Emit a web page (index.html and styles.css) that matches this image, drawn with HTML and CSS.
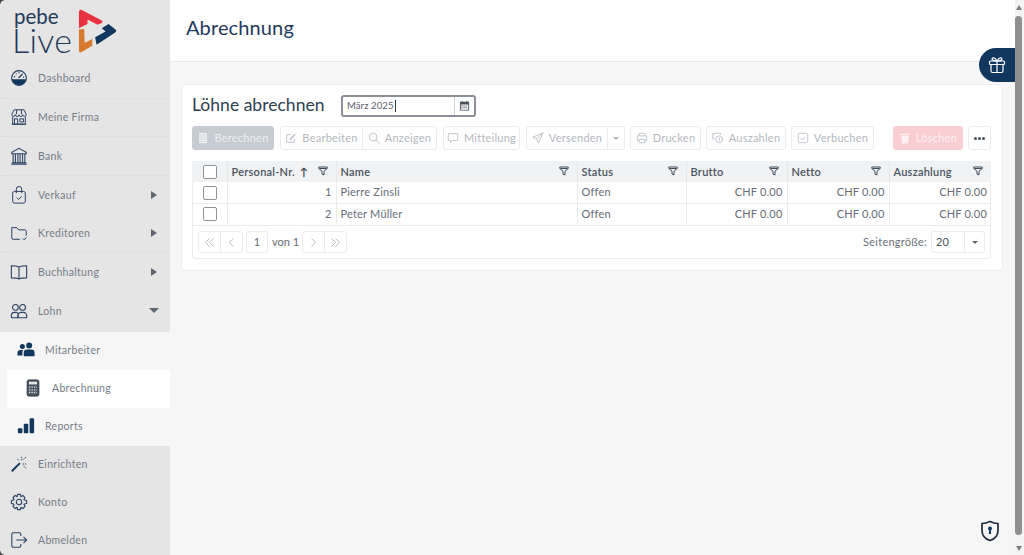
FILE: index.html
```html
<!DOCTYPE html>
<html lang="de">
<head>
<meta charset="utf-8">
<title>Abrechnung</title>
<link rel="stylesheet" href="styles.css">
</head>
<body>
<div class="app">
  <span class="corner tl"></span>
  <span class="corner bl"></span>
  <aside class="sidebar">
    <div class="logo">
      <div class="logo-text"><span class="pebe">pebe</span><span class="live">Live</span></div>
      <svg class="logo-mark" width="40" height="45" viewBox="0 0 42 46">
        <path fill="#e8323f" d="M1 1.500 L3 0 L25 11.500 Q26.500 13 25 14 L20.500 16 L10 10.500 L10 15 L1 19.500 Z"/>
        <path fill="#d87a2e" d="M1 21 L6.500 20.500 L7 35 L15 31 L15 38 L3 45 Q1 45 1 43 Z"/>
        <path fill="#12375e" d="M32 15 L40 21.500 Q40.500 23 39 24 L19.500 37 L18 29 L29 23 L25 19.500 Z"/>
      </svg>
    </div>
    <nav class="nav">
      <a class="item sep">
        <svg class="ico" viewBox="0 0 20 20"><circle cx="10" cy="10" r="8.200" fill="none" stroke="#1f3a5c" stroke-width="1.200"/><path fill="#12375e" d="M2 11.500 H18 A8.200 8.200 0 0 1 2 11.500Z"/><path stroke="#1f3a5c" stroke-width="1.300" d="M9.500 10 L14 5.500 M4.500 8.500h1.200 M14.500 9h1 M6.500 5.200l.7.7 M10 3.600v1.200" fill="none"/></svg>
        <span class="label">Dashboard</span>
      </a>
      <a class="item sep">
        <svg class="ico" viewBox="0 0 20 20" fill="none" stroke="#2b4263" stroke-width="1.100"><path d="M4.500 2h11l2.500 5a2 2 0 0 1-4 .5 2 2 0 0 1-4 0 2 2 0 0 1-4 0 2 2 0 0 1-4-.5z"/><path d="M3 9.500V18h14V9.500M5 18v-6h3.500v6M11 12h4v3.500h-4zM2 18h16M7.500 2L7 7M12.500 2l.5 5"/></svg>
        <span class="label">Meine Firma</span>
      </a>
      <a class="item sep">
        <svg class="ico" viewBox="0 0 20 20" fill="none" stroke="#2b4263" stroke-width="1.200"><path d="M10 1.500L18 6v1.500H2V6zM2 17.500h16M1.500 19h17M3.500 8v9M6 8v9M8.800 8v9M11.200 8v9M14 8v9M16.500 8v9"/></svg>
        <span class="label">Bank</span>
      </a>
      <a class="item">
        <svg class="ico" viewBox="0 0 20 20" fill="none" stroke="#2b4263" stroke-width="1.100"><rect x="3" y="6" width="14" height="13" rx="2"/><path d="M7 8V3.500a3 3 0 0 1 6 0V8M7.500 13l2 2 3.500-3.500"/></svg>
        <span class="label">Verkauf</span><span class="arrow-r"></span>
      </a>
      <a class="item sep">
        <svg class="ico" viewBox="0 0 20 20" fill="none" stroke="#2b4263" stroke-width="1.100"><path d="M11 17H3.500A1.500 1.500 0 0 1 2 15.500V4h5.500l2 2.500h7A1.500 1.500 0 0 1 18 8v5M14 16l1.500 1.500L18.500 15"/></svg>
        <span class="label">Kreditoren</span><span class="arrow-r"></span>
      </a>
      <a class="item">
        <svg class="ico" viewBox="0 0 20 20" fill="none" stroke="#2b4263" stroke-width="1.200"><path d="M10 4.500C8 3.500 5 3 1.500 3v13.500c3.500 0 6.500.2 8.500 1.200 2-1 5-1.200 8.500-1.200V3C15 3 12 3.500 10 4.500zM10 4.500v13"/></svg>
        <span class="label">Buchhaltung</span><span class="arrow-r"></span>
      </a>
      <a class="item">
        <svg class="ico" viewBox="0 0 20 20" fill="none" stroke="#2b4263" stroke-width="1.200"><circle cx="6" cy="6" r="3.200"/><circle cx="14" cy="6" r="3.200"/><path d="M1.500 17v-2a3.500 3.500 0 0 1 3.500-3.500h2A3.500 3.500 0 0 1 8 17.500H2.500zM9 17.500a3 3 0 0 1 0-3.500 3.500 3.500 0 0 1 3-2.500h3a3.500 3.500 0 0 1 3.500 3.500v2.500z"/></svg>
        <span class="label">Lohn</span><span class="arrow-d"></span>
      </a>
      <div class="submenu">
        <a class="subitem">
          <svg class="ico" viewBox="0 0 20 20" fill="#12375e"><circle cx="6" cy="6" r="2.800"/><circle cx="13.500" cy="5" r="3.300"/><path d="M0.500 16v-2.500A3.500 3.500 0 0 1 4 10h3a4 4 0 0 0-1 2.500V16zM7.500 17v-4a3.500 3.500 0 0 1 3.500-3.500h5a3.500 3.500 0 0 1 3.500 3.500v4z"/></svg>
          <span class="label">Mitarbeiter</span>
        </a>
        <a class="subitem active">
          <svg class="ico" viewBox="0 0 20 20"><rect x="3.500" y="1" width="13" height="18" rx="2" fill="#4b5563" stroke="#2b3440"/><rect x="5.500" y="3" width="9" height="3" fill="#e5e5e5"/><path stroke="#e5e5e5" stroke-width="1.500" stroke-dasharray="1.500 1.300" d="M5.500 9h9M5.500 12h9M5.500 15h9"/></svg>
          <span class="label">Abrechnung</span>
        </a>
        <a class="subitem">
          <svg class="ico" viewBox="0 0 20 20" fill="#12375e"><rect x="1" y="12.500" width="5" height="5.500" rx="1"/><rect x="7.500" y="7.500" width="5" height="10.500" rx="1"/><rect x="14" y="1.500" width="5" height="16.500" rx="1"/></svg>
          <span class="label">Reports</span>
        </a>
      </div>
      <a class="item short">
        <svg class="ico" viewBox="0 0 20 20" fill="none"><path stroke="#12375e" stroke-width="2.200" d="M2 18L11 9"/><path stroke="#2b4263" stroke-width="1.100" stroke-dasharray="1.500 1" d="M13 2v5M14 10h5M15 5l3-3M15 12l3 3M8.500 4.500l2 2"/></svg>
        <span class="label">Einrichten</span>
      </a>
      <a class="item short">
        <svg class="ico" viewBox="0 0 20 20" fill="none" stroke="#2b4263" stroke-width="1.200"><circle cx="10" cy="10" r="3"/><path d="M8.500 1.500h3l.6 2.500 2.200-1.200 2.300 2.300L15.500 7.500 18.500 8.500v3l-3 1 1.200 2.400-2.300 2.300-2.300-1.200-.6 2.500h-3l-.6-2.500-2.300 1.200-2.300-2.300 1.200-2.400-3-1v-3l3-1L3.300 5.100l2.300-2.300 2.300 1.200z"/></svg>
        <span class="label">Konto</span>
      </a>
      <a class="item short">
        <svg class="ico" viewBox="0 0 20 20" fill="none" stroke="#2b4263" stroke-width="1.200"><path d="M12 5.500V3.500A1.500 1.500 0 0 0 10.500 2H3.500A1.500 1.500 0 0 0 2 3.500v13A1.500 1.500 0 0 0 3.500 18h7a1.500 1.500 0 0 0 1.500-1.500v-2M7 10h11M15 6.500l3.500 3.500-3.500 3.500"/></svg>
        <span class="label">Abmelden</span>
      </a>
    </nav>
  </aside>

  <main class="main">
    <header class="page-head"><h1 class="page-title">Abrechnung</h1></header>
    <div class="content">
      <section class="card">
        <div class="title-row">
          <h2 class="card-title">Löhne abrechnen</h2>
          <div class="date-field">
            <span class="date-value"><span class="date-text">März 2025</span></span>
            <span class="date-btn">
              <svg width="11" height="11" viewBox="0 0 12 12"><path fill="#495057" d="M1 2h2V1h1v1h4V1h1v1h2v9.500H1zM2 5v5.500h8V5z"/><path stroke="#495057" stroke-dasharray="1.500 .8" d="M2.500 6.500h7M2.500 8.500h7"/></svg>
            </span>
          </div>
        </div>

        <div class="toolbar">
          <button class="btn primary"><svg class="bi" viewBox="0 0 14 14"><path fill="#eef0f2" d="M2.500 1h9v12h-9z"/><path stroke="#c4cad0" stroke-dasharray="1.500 .8" d="M4 6h6M4 8.500h6M4 11h6M4 3.500h6"/></svg>Berechnen</button>
          <div class="group edit-group">
            <button class="btn join-r"><svg class="bi" viewBox="0 0 14 14" fill="none" stroke="#b9bec3"><path d="M11 8v4H2V3h5"/><path stroke-width="1.600" d="M5.500 9L12 2.500"/></svg>Bearbeiten</button>
            <button class="btn join-l"><svg class="bi" viewBox="0 0 14 14" fill="none" stroke="#b9bec3"><circle cx="6" cy="6" r="4.500"/><path d="M9.500 9.500l4 4"/></svg>Anzeigen</button>
          </div>
          <button class="btn b-message"><svg class="bi" viewBox="0 0 14 14" fill="none" stroke="#b9bec3"><path d="M1.500 2h11v8H6l-2 2.500V10H1.500z"/></svg>Mitteilung</button>
          <div class="group send-group">
            <button class="btn join-r send"><svg class="bi" viewBox="0 0 14 14" fill="none" stroke="#b9bec3"><path d="M13 1L1 6l4.500 2L7.500 13zM13 1L5.500 8"/></svg>Versenden</button>
            <button class="btn join-l caret-btn"><span class="caret"></span></button>
          </div>
          <button class="btn b-print"><svg class="bi" viewBox="0 0 14 14" fill="none" stroke="#b9bec3"><path d="M3.500 4.500V1.500h7v3M3.500 10h-2V4.500h11V10h-2M3.500 8.500h7v4h-7z"/></svg>Drucken</button>
          <button class="btn b-pay"><svg class="bi" viewBox="0 0 14 14" fill="none" stroke="#b9bec3"><path d="M10 3V1.500H1V8h2"/><circle cx="8.500" cy="8.500" r="4"/><path d="M8.500 6.500v4"/></svg>Auszahlen</button>
          <button class="btn b-book"><svg class="bi" viewBox="0 0 14 14" fill="none" stroke="#b9bec3"><rect x="1.500" y="1.500" width="11" height="11" rx="1.500"/><path d="M4.500 7l2 2 3-3.500"/></svg>Verbuchen</button>
          <button class="btn danger"><svg class="bi" viewBox="0 0 14 14" fill="#fdf1f2"><path d="M1.500 2h11v1.500h-11zM2.500 4.500h9l-1 9h-7z"/></svg>Löschen</button>
          <button class="btn more"><span class="dots"></span></button>
        </div>

        <div class="grid-box">
          <table class="grid">
            <colgroup><col class="c-check"><col class="c-nr"><col class="c-name"><col class="c-status"><col class="c-money"><col class="c-money2"><col class="c-money2"></colgroup>
            <thead>
              <tr>
                <th class="center"><span class="check"></span></th>
                <th><div class="th"><span>Personal-Nr.</span><span class="sort">↑</span><svg class="filter" viewBox="0 0 10 10"><path d="M.8 1h8.400v1.600L6 5.200V9L4 8V5.200L.8 2.600zM1.500 2.500h7" /></svg></div></th>
                <th><div class="th"><span>Name</span><svg class="filter" viewBox="0 0 10 10"><path d="M.8 1h8.400v1.600L6 5.200V9L4 8V5.200L.8 2.600zM1.500 2.500h7"/></svg></div></th>
                <th><div class="th"><span>Status</span><svg class="filter" viewBox="0 0 10 10"><path d="M.8 1h8.400v1.600L6 5.200V9L4 8V5.200L.8 2.600zM1.500 2.500h7"/></svg></div></th>
                <th><div class="th"><span>Brutto</span><svg class="filter" viewBox="0 0 10 10"><path d="M.8 1h8.400v1.600L6 5.200V9L4 8V5.200L.8 2.600zM1.500 2.500h7"/></svg></div></th>
                <th><div class="th"><span>Netto</span><svg class="filter" viewBox="0 0 10 10"><path d="M.8 1h8.400v1.600L6 5.200V9L4 8V5.200L.8 2.600zM1.500 2.500h7"/></svg></div></th>
                <th><div class="th"><span>Auszahlung</span><svg class="filter" viewBox="0 0 10 10"><path d="M.8 1h8.400v1.600L6 5.200V9L4 8V5.200L.8 2.600zM1.500 2.500h7"/></svg></div></th>
              </tr>
            </thead>
            <tbody>
              <tr><td class="center"><span class="check"></span></td><td class="num">1</td><td>Pierre Zinsli</td><td>Offen</td><td class="num">CHF 0.00</td><td class="num">CHF 0.00</td><td class="num">CHF 0.00</td></tr>
              <tr><td class="center"><span class="check"></span></td><td class="num">2</td><td>Peter Müller</td><td>Offen</td><td class="num">CHF 0.00</td><td class="num">CHF 0.00</td><td class="num">CHF 0.00</td></tr>
            </tbody>
          </table>
          <div class="pager">
            <div class="pager-left">
              <div class="pgroup">
                <span class="pbtn"><svg class="chev" viewBox="0 0 12 12"><path d="M6 1.500L1.500 6 6 10.500M10.500 1.500L6 6l4.500 4.500"/></svg></span>
                <span class="pbtn"><svg class="chev" viewBox="0 0 12 12"><path d="M8 1.500L3.500 6 8 10.500"/></svg></span>
              </div>
              <span class="pnum">1</span>
              <span class="pof">von 1</span>
              <div class="pgroup">
                <span class="pbtn"><svg class="chev" viewBox="0 0 12 12"><path d="M4 1.500L8.500 6 4 10.500"/></svg></span>
                <span class="pbtn"><svg class="chev" viewBox="0 0 12 12"><path d="M1.500 1.500L6 6l-4.500 4.500M6 1.500L10.500 6 6 10.500"/></svg></span>
              </div>
            </div>
            <div class="pager-right">
              <span class="psize-label">Seitengröße:</span>
              <div class="psize"><span class="psize-val">20</span><span class="psize-btn"><span class="caret dark"></span></span></div>
            </div>
          </div>
        </div>
      </section>
    </div>
    <div class="gift">
      <svg width="18" height="18" viewBox="0 0 18 18" fill="none" stroke="#fff" stroke-width="1.200"><rect x="1.500" y="5" width="15" height="3.500" rx="1"/><path d="M3 8.500V15a1.500 1.500 0 0 0 1.500 1.500h9A1.500 1.500 0 0 0 15 15V8.500M9 5v11.500M9 5C7 1 3.500 1 4.200 3.500 4.500 4.700 6 5 9 5zM9 5c2-4 5.500-4 4.800-1.500C13.500 4.700 12 5 9 5z"/></svg>
    </div>
    <div class="shield">
      <svg width="20" height="22" viewBox="0 0 20 22"><path fill="none" stroke="#1f2a3a" stroke-width="1.700" d="M10 1.500c3 1.500 5.500 2 8 2v7c0 5-3.500 8.500-8 10-4.500-1.500-8-5-8-10v-7c2.500 0 5-.5 8-2z"/><circle cx="10" cy="8.500" r="2" fill="#12375e"/><path d="M9.200 9h1.600l.3 5H8.900z" fill="#12375e"/></svg>
    </div>
  </main>
  <div class="scrollbar">
    <span class="sb-up"></span>
    <span class="sb-thumb"></span>
    <span class="sb-down"></span>
  </div>
</div>
</body>
</html>
```

FILE: styles.css
```css
* { box-sizing: border-box; }
html, body { margin: 0; height: 100%; overflow: hidden; }
body { font-family: "Lato", "Open Sans", sans-serif; color: #495057; background: #f6f6f6; }
.app { display: flex; width: 1024px; height: 555px; overflow: hidden; position: relative; }
.corner { position: absolute; left: 0; width: 4px; height: 4px; z-index: 2; }
.corner.tl { top: 0; background: radial-gradient(circle at 100% 100%, transparent 3px, #444 4px); }
.corner.bl { bottom: 0; background: radial-gradient(circle at 100% 0, transparent 3px, #444 4px); }

/* sidebar */
.sidebar { width: 170px; flex: none; background: #e5e5e5; height: 555px; overflow: hidden; }
.logo { height: 60px; display: flex; align-items: flex-start; padding: 7px 0 0 14px; }
.logo-text { display: flex; flex-direction: column; color: #1f3a5c; width: 64px; }
.pebe { font-size: 20.500px; line-height: 19px; font-weight: 400; }
.live { font-size: 34px; line-height: 27px; font-weight: 300; letter-spacing: .3px; margin-left: -2px; }
.logo-mark { flex: none; margin: 2px 0 0 0; }
.nav { display: flex; flex-direction: column; }
.item { height: 38.700px; display: flex; align-items: center; padding: 0 12px 1px 10px; font-size: 10.500px; letter-spacing: .3px; color: #767c85; }
.item.sep { border-bottom: 1px dotted #d9d9d9; }
.item.short { height: 38px; padding-bottom: 2px; }
.ico { width: 18px; height: 18px; flex: none; margin-right: 10px; }
.label { flex: 1; }
.arrow-r { width: 0; height: 0; border-left: 6px solid #5f6670; border-top: 4px solid transparent; border-bottom: 4px solid transparent; margin-right: 1px; }
.arrow-d { width: 0; height: 0; border-top: 5px solid #5f6670; border-left: 5px solid transparent; border-right: 5px solid transparent; margin-right: -1px; }
.submenu { background: #f6f6f6; display: flex; flex-direction: column; margin-top: 1px; }
.subitem { height: 38px; display: flex; align-items: center; padding: 0 0 2px 17px; font-size: 10.500px; letter-spacing: .3px; color: #767c85; }
.subitem .ico { margin-right: 10px; }
.subitem.active { background: #fff; margin-left: 7px; padding-left: 17px; }

/* main */
.main { flex: 1; min-width: 0; display: flex; flex-direction: column; position: relative; }
.page-head { height: 62px; background: #fff; border-bottom: 1px solid #e9e9e9; display: flex; align-items: center; padding: 0 16px 7px; }
.page-title { margin: 0; font-size: 20px; font-weight: 400; color: #1f3a5c; letter-spacing: .12px; }
.content { padding: 22px 12px 0 11px; }
.card { background: #fff; border: 1px solid #ececec; border-radius: 4px; height: 187px; padding: 0 10px; }
.title-row { display: flex; align-items: center; height: 41px; }
.card-title { margin: 0 0 2px; font-size: 17.500px; font-weight: 400; color: #2d3e52; letter-spacing: .02px; width: 149px; }
.date-field { width: 135px; height: 22px; border: 2px solid #8b9096; border-radius: 3px; display: flex; align-items: stretch; font-size: 9.500px; color: #5a6068; }
.date-value { flex: 1; padding-left: 4px; display: flex; align-items: center; letter-spacing: .1px; }
.date-text { border-right: 1px solid #3a3f45; padding-right: 1px; line-height: 12px; }
.date-btn { width: 20px; border-left: 1px solid #d0d3d6; display: flex; align-items: center; justify-content: center; }

.toolbar { display: flex; align-items: stretch; gap: 5px; height: 24px; }
.group { display: flex; }
.edit-group { margin-left: 1px; }
.btn { font-family: inherit; font-size: 11px; letter-spacing: .25px; color: #b4b9be; background: #fff; border: 1px solid #ececec; border-radius: 3px; padding: 0 5px 1px; display: flex; align-items: center; justify-content: center; height: 24px; white-space: nowrap; }
.bi { width: 12px; height: 12px; margin-right: 5px; flex: none; }
.btn.primary { background: #c6ccd2; border-color: #c6ccd2; color: #eef0f2; width: 82px; }
.b-message { width: 77px; margin-left: 1px; }
.edit-group .join-r { width: 83px; }
.edit-group .join-l { width: 75px; }
.join-r { border-top-right-radius: 0; border-bottom-right-radius: 0; }
.join-l { border-top-left-radius: 0; border-bottom-left-radius: 0; margin-left: -1px; }
.send-group { margin-left: 1px; }
.send { width: 82px; }
.caret-btn { width: 18px; padding: 0; }
.b-print { width: 71px; }
.b-pay { width: 80px; }
.b-book { width: 83px; }
.caret { width: 0; height: 0; border-top: 3.500px solid #b4b9be; border-left: 3.500px solid transparent; border-right: 3.500px solid transparent; }
.caret.dark { border-top-color: #5f6670; }
.btn.danger { background: #f8ced2; border-color: #f8ced2; color: #fdf1f2; width: 70px; margin-left: 14px; }
.btn.more { width: 23px; padding: 0; }
.dots { width: 3px; height: 3px; border-radius: 50%; background: #495057; box-shadow: -4px 0 0 #495057, 4px 0 0 #495057; }

.grid-box { margin-top: 11px; border: 1px solid #ececec; border-top: 0; border-radius: 3px; height: 98px; width: 799px; }
.grid { width: 799px; margin-left: -1px; border-collapse: collapse; table-layout: fixed; font-size: 11px; }
.c-check { width: 35px; } .c-nr { width: 109px; } .c-name { width: 241px; } .c-status { width: 109px; } .c-money { width: 101px; } .c-money2 { width: 102px; }
.grid th { height: 21px; background: #f1f2f3; border-right: 1px solid #e6e7e8; padding: 0 4px 1px; font-weight: 600; font-size: 11px; color: #4a5461; text-align: left; letter-spacing: .25px; }
.grid th:last-child, .grid td:last-child { border-right: 0; }
.th { display: flex; align-items: center; }
.th > span:first-child { flex: 1; white-space: nowrap; }
.sort { margin-right: 10px; font-size: 11px; color: #2d3744; width: 8px; }
.filter { width: 10px; height: 10px; fill: none; stroke: #3f4a57; stroke-width: 1; margin-right: 4px; flex: none; }
.grid td { height: 21.500px; line-height: 14px; border-right: 1px solid #ececec; border-bottom: 1px solid #ececec; padding: 0 4px 1px; color: #666c75; letter-spacing: .2px; }
.grid td.num { text-align: right; }
.grid .center { text-align: center; padding: 0 0 1px 2px; }
.check { display: inline-block; width: 14px; height: 14px; border: 1px solid #8e9398; border-radius: 2px; background: #fff; vertical-align: middle; }

.pager { display: flex; justify-content: space-between; align-items: center; height: 33px; padding: 0 5px; }
.pager-left, .pager-right { display: flex; align-items: center; }
.pgroup { display: flex; }
.pbtn { width: 23px; height: 22px; border: 1px solid #ececec; display: flex; align-items: center; justify-content: center; margin-left: -1px; }
.pgroup .pbtn:first-child { margin-left: 0; border-radius: 3px 0 0 3px; }
.pgroup .pbtn:last-child { border-radius: 0 3px 3px 0; }
.chev { width: 11px; height: 11px; fill: none; stroke: #b0b5ba; stroke-width: 1; }
.pnum { width: 22px; height: 22px; border: 1px solid #ececec; border-radius: 3px; margin-left: 3px; display: flex; align-items: center; justify-content: center; font-size: 11px; color: #666c75; padding-bottom: 1px; }
.pof { font-size: 11px; color: #666c75; margin: 0 4px; width: 26px; white-space: nowrap; padding-bottom: 1px; }
.psize-label { font-size: 11px; letter-spacing: .25px; color: #6b7178; margin-right: 4px; padding-bottom: 1px; }
.psize { width: 54px; height: 22px; border: 1px solid #ececec; border-radius: 3px; display: flex; font-size: 11px; color: #495057; }
.psize-val { flex: 1; padding: 0 0 1px 4px; display: flex; align-items: center; }
.psize-btn { width: 20px; border-left: 1px solid #ececec; display: flex; align-items: center; justify-content: center; }

.gift { position: absolute; right: 0; top: 48px; width: 36px; height: 34px; background: #12375e; border-radius: 17px 0 0 17px; display: flex; align-items: center; justify-content: center; }
.shield { position: absolute; right: 15px; top: 520px; width: 20px; height: 22px; }

.scrollbar { width: 9px; flex: none; background: #f4f4f4; display: flex; flex-direction: column; align-items: center; padding-right: 2px; }
.sb-up { margin-top: 5px; width: 0; height: 0; border-bottom: 5px solid #7d7d7d; border-left: 3.500px solid transparent; border-right: 3.500px solid transparent; }
.sb-thumb { margin-top: 6px; width: 7px; flex: none; height: 519px; background: #8f8f8f; border-radius: 4px; }
.sb-down { margin-top: 11px; width: 0; height: 0; border-top: 5px solid #7d7d7d; border-left: 3.500px solid transparent; border-right: 3.500px solid transparent; }
```
